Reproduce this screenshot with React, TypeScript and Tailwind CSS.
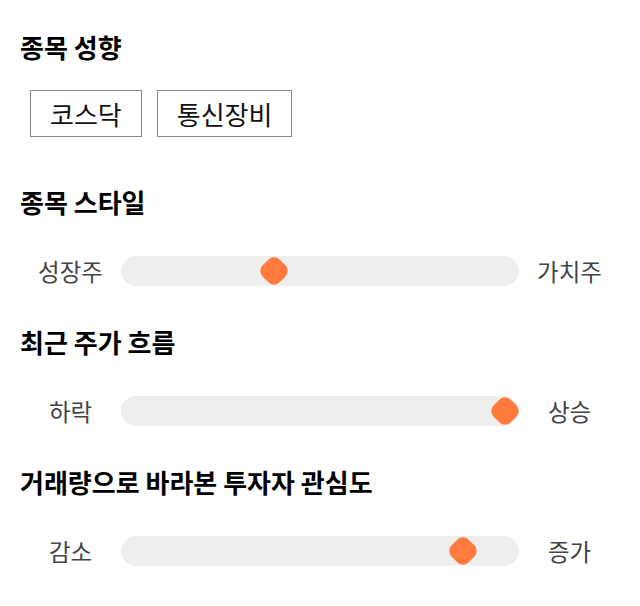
import React from 'react'

const FONT = '"Noto Sans CJK KR", "Noto Sans", sans-serif'

function Slider({ left, right, pos }: { left: string; right: string; pos: number }) {
  // pos = thumb centre in px from track start
  return (
    <div className="flex items-center h-[30px]">
      <span className="w-[101px] text-center text-[23.5px] leading-8 text-[#444]">{left}</span>
      <div className="relative h-[30px] w-[398px] rounded-full bg-[#eeeeee]">
        <div
          className="absolute top-[3px] w-[24px] h-[24px] rotate-45 rounded-[8px] bg-[#ff7a3d]"
          style={{ left: pos - 12 }}
        />
      </div>
      <span className="w-[101px] text-center text-[23.5px] leading-8 text-[#444]">{right}</span>
    </div>
  )
}

export default function App() {
  return (
    <div className="w-[640px] h-[606px] bg-white px-5 pt-[31px]" style={{ fontFamily: FONT }}>
      <h2 className="text-[26px] leading-8 font-bold text-black">종목 성향</h2>
      <div className="mt-[27px] ml-[10px] flex gap-[15px]">
        {['코스닥', '통신장비'].map(t => (
          <div key={t} className="h-[47px] px-[19px] flex items-center border border-[#888] text-[26px] text-[#111]">
            {t}
          </div>
        ))}
      </div>

      <h2 className="mt-[49px] text-[26px] leading-8 font-bold text-black">종목 스타일</h2>
      <div className="mt-[38px]">
        <Slider left="성장주" right="가치주" pos={153} />
      </div>

      <h2 className="mt-[40px] text-[26px] leading-8 font-bold text-black">최근 주가 흐름</h2>
      <div className="mt-[38px]">
        <Slider left="하락" right="상승" pos={384} />
      </div>

      <h2 className="mt-[40px] text-[26px] leading-8 font-bold text-black">거래량으로 바라본 투자자 관심도</h2>
      <div className="mt-[38px]">
        <Slider left="감소" right="증가" pos={342} />
      </div>
    </div>
  )
}
